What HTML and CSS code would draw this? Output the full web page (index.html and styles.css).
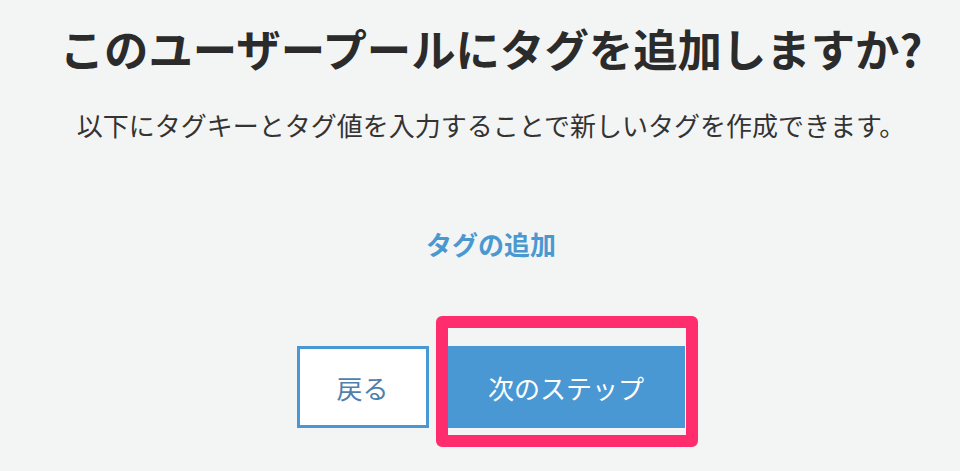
FILE: index.html
```html
<!DOCTYPE html>
<html lang="ja">

<head>
    <meta charset="UTF-8">
    <meta name="viewport" content="width=device-width, initial-scale=1.0">
    <title>タグの追加</title>
    <link rel="stylesheet" href="styles.css">
</head>

<body>
    <div class="container">
        <h1 class="title">このユーザープールにタグを追加しますか?</h1>
        <p class="lead">以下にタグキーとタグ値を入力することで新しいタグを作成できます。</p>

        <a href="#" class="add-tag">タグの追加</a>

        <div class="actions">
            <button class="btn btn-back">戻る</button>
            <div class="highlight">
                <button class="btn btn-next">次のステップ</button>
            </div>
        </div>
    </div>
</body>

</html>
```

FILE: styles.css
```css
html,
body {
    min-height: 100%;
}

body {
    margin: 0;
    background: #f3f5f5;
    font-family: "Noto Sans CJK JP", "Noto Sans", sans-serif;
    color: #2b2b2b;
}

.container {
    display: flex;
    flex-direction: column;
    align-items: center;
    padding: 20px 0 42px 22px;
}

.title {
    margin: 0;
    font-size: 44.4px;
    font-weight: bold;
    line-height: 56px;
    white-space: nowrap;
}

.lead {
    margin: 31px 0 0;
    font-size: 26px;
    line-height: 36px;
    color: #333;
    white-space: nowrap;
}

.add-tag {
    margin-top: 83px;
    font-size: 26px;
    font-weight: bold;
    line-height: 36px;
    color: #4a98d0;
    text-decoration: none;
}

.actions {
    display: flex;
    align-items: flex-start;
    gap: 7px;
    margin-top: 84px;
    padding-left: 12px;
}

.btn {
    display: block;
    height: 82px;
    font-family: inherit;
    font-size: 26px;
    cursor: pointer;
}

.btn-back {
    width: 132px;
    background: #fff;
    border: 3px solid #4a98d3;
    color: #4f7fae;
}

/* pink box drawn round the next button */
.highlight {
    margin: -30px 0 -19px 0;
    padding: 18px 1px 7px 0;
    border: 12px solid #ff2d6e;
    border-radius: 6px;
}

.btn-next {
    width: 237px;
    background: #4a98d3;
    border: none;
    color: #fff;
}
```
